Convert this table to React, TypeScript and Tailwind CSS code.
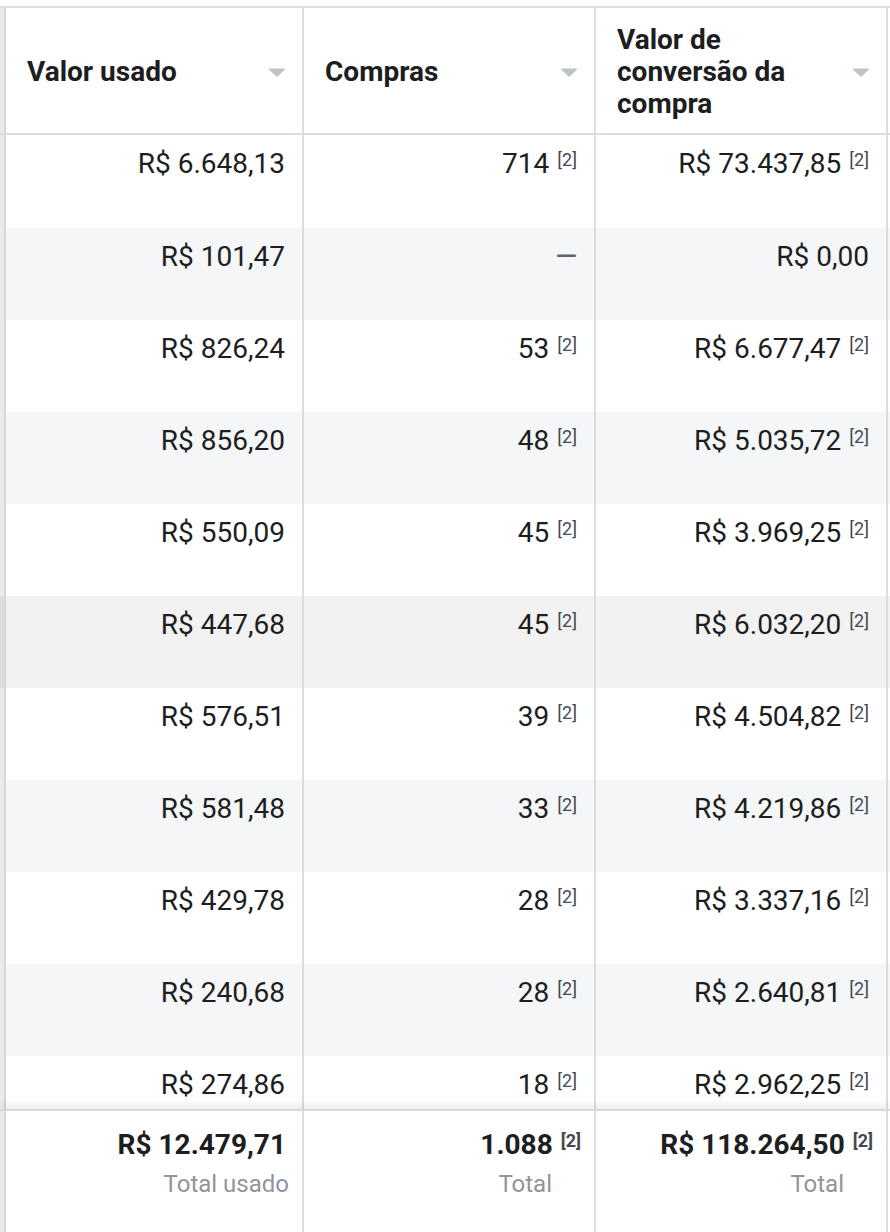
import React from 'react'

type Row = {
    spent: string
    purchases: string | null
    value: string
    valueNote: boolean
}

const rows: Row[] = [
    { spent: 'R$ 6.648,13', purchases: '714', value: 'R$ 73.437,85', valueNote: true },
    { spent: 'R$ 101,47', purchases: null, value: 'R$ 0,00', valueNote: false },
    { spent: 'R$ 826,24', purchases: '53', value: 'R$ 6.677,47', valueNote: true },
    { spent: 'R$ 856,20', purchases: '48', value: 'R$ 5.035,72', valueNote: true },
    { spent: 'R$ 550,09', purchases: '45', value: 'R$ 3.969,25', valueNote: true },
    { spent: 'R$ 447,68', purchases: '45', value: 'R$ 6.032,20', valueNote: true },
    { spent: 'R$ 576,51', purchases: '39', value: 'R$ 4.504,82', valueNote: true },
    { spent: 'R$ 581,48', purchases: '33', value: 'R$ 4.219,86', valueNote: true },
    { spent: 'R$ 429,78', purchases: '28', value: 'R$ 3.337,16', valueNote: true },
    { spent: 'R$ 240,68', purchases: '28', value: 'R$ 2.640,81', valueNote: true },
    { spent: 'R$ 274,86', purchases: '18', value: 'R$ 2.962,25', valueNote: true },
]

const Note = ({ bold = false }: { bold?: boolean }) => (
    <span
        className={`ml-[8px] align-[7px] text-[18px] leading-none text-[#444950] ${bold ? 'font-bold' : ''}`}
    >
        [2]
    </span>
)

const Caret = () => (
    <svg width="18" height="9" viewBox="0 0 18 9" className="shrink-0">
        <path d="M1 1.5 Q0.5 0.5 1.8 0.5 H16.2 Q17.5 0.5 17 1.5 L9.8 8.3 Q9 9 8.2 8.3 Z" fill="#bec3c9" />
    </svg>
)

function Edge({ hover = false }: { hover?: boolean }) {
    return (
        <>
            <div className={`w-[4px] shrink-0 ${hover ? 'bg-[#dedede]' : 'bg-[#ebebeb]'}`} />
            <div className="w-[2px] shrink-0 bg-[#d6d6d6]" />
        </>
    )
}

function HeaderCell({ children, width }: { children: React.ReactNode; width: string }) {
    return (
        <div className={`${width} shrink-0 flex items-center justify-between pt-[3px] pl-[21px] pr-[16px] border-r-2 border-[#dadde1]`}>
            <div className="text-[28px] leading-[32px] font-bold text-[#1c1e21]">{children}</div>
            <Caret />
        </div>
    )
}

export default function App() {
    return (
        <div
            className="w-[890px] h-[1232px] bg-white overflow-hidden flex flex-col pt-[6px]"
            style={{ fontFamily: 'Roboto, "Liberation Sans", sans-serif' }}
        >
            <div className="border-t-2 border-[#dadde1]" />

            {/* header */}
            <div className="flex h-[127px] shrink-0 border-b-2 border-[#dadde1]">
                <Edge />
                <HeaderCell width="w-[298px]">Valor usado</HeaderCell>
                <HeaderCell width="w-[292px]">Compras</HeaderCell>
                <HeaderCell width="w-[292px]">
                    Valor de
                    <br />
                    conversão da
                    <br />
                    compra
                </HeaderCell>
            </div>

            {/* body */}
            <div className="h-[974px] shrink-0 overflow-hidden">
                {rows.map((row, i) => {
                    const hover = i === 5
                    const bg = hover ? 'bg-[#f2f2f2]' : i % 2 === 1 ? 'bg-[#f5f6f7]' : 'bg-white'
                    return (
                        <div key={i} className={`flex ${i === 0 ? 'h-[93px]' : 'h-[92px]'} ${bg}`}>
                            <Edge hover={hover} />
                            <div className="w-[298px] shrink-0 pt-[13px] pr-[17px] text-right text-[28px] leading-[32px] text-[#1c1e21] border-r-2 border-[#dadde1]">
                                {row.spent}
                            </div>
                            <div className="w-[292px] shrink-0 pt-[13px] pr-[17px] text-right text-[28px] leading-[32px] text-[#1c1e21] border-r-2 border-[#dadde1]">
                                {row.purchases ? (
                                    <>
                                        {row.purchases}
                                        <Note />
                                    </>
                                ) : (
                                    <span className="font-medium text-[#606770]">—</span>
                                )}
                            </div>
                            <div className="w-[292px] shrink-0 pt-[13px] pr-[17px] text-right text-[28px] leading-[32px] text-[#1c1e21] border-r-2 border-[#dadde1]">
                                {row.value}
                                {row.valueNote && <Note />}
                            </div>
                        </div>
                    )
                })}
            </div>

            {/* totals */}
            <div className="relative z-10 flex flex-1 border-t-2 border-[#d8d8d8] bg-white shadow-[0_-5px_8px_rgba(0,0,0,0.07)]">
                <Edge />
                <div className="w-[298px] shrink-0 flex flex-col items-end pt-[18px] pr-[13px] border-r-2 border-[#dadde1]">
                    <span className="text-[28px] leading-[32px] font-bold text-[#1c1e21] mr-[3px]">R$ 12.479,71</span>
                    <span className="mt-[7px] text-[24px] leading-[32px] text-[#90949c]">Total usado</span>
                </div>
                <div className="w-[292px] shrink-0 flex flex-col items-end pt-[18px] pr-[13px] border-r-2 border-[#dadde1]">
                    <div className="text-[28px] leading-[32px] font-bold text-[#1c1e21]">
                        1.088
                        <Note bold />
                    </div>
                    <span className="mt-[7px] mr-[29px] text-[24px] leading-[32px] text-[#90949c]">Total</span>
                </div>
                <div className="w-[292px] shrink-0 flex flex-col items-end pt-[18px] pr-[13px] border-r-2 border-[#dadde1]">
                    <div className="text-[28px] leading-[32px] font-bold text-[#1c1e21]">
                        R$ 118.264,50
                        <Note bold />
                    </div>
                    <span className="mt-[7px] mr-[29px] text-[24px] leading-[32px] text-[#90949c]">Total</span>
                </div>
            </div>
        </div>
    )
}
